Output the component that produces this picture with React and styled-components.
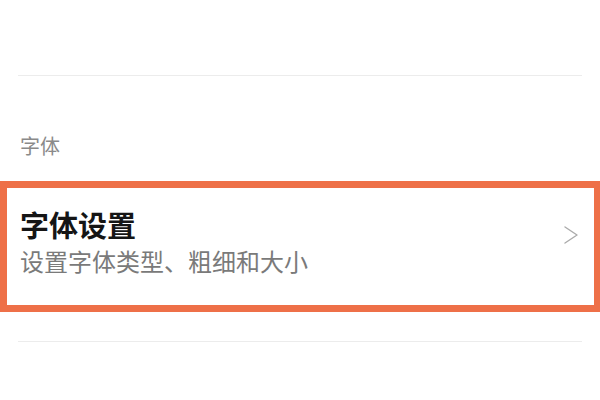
import React from "react";
import styled, { createGlobalStyle } from "styled-components";

const Global = createGlobalStyle`
  html, body { margin: 0; padding: 0; background: #ffffff; }
  body {
    font-family: "Noto Sans CJK SC", "Noto Sans", sans-serif;
    overflow: hidden;
    width: 600px;
    height: 400px;
  }
`;

const Page = styled.div`
  width: 600px;
  height: 400px;
  overflow: hidden;
  background: #ffffff;
  display: flex;
  flex-direction: column;
`;

const Spacer = styled.div`
  height: ${(p) => p.h}px;
  flex: none;
`;

const Divider = styled.div`
  height: 1px;
  margin: 0 18px;
  background: #ececec;
  flex: none;
`;

const SectionHeader = styled.div`
  height: 105px;
  padding: 56px 0 0 20px;
  box-sizing: border-box;
  font-size: 20px;
  line-height: 28px;
  color: #8a8a8a;
  flex: none;
`;

const HighlightRow = styled.div`
  height: 131px;
  box-sizing: border-box;
  border: 7px solid #ee7048;
  border-right-width: 6px;
  padding: 18px 14px 0 13px;
  display: flex;
  align-items: flex-start;
  flex: none;
`;

const RowText = styled.div`
  flex: 1;
  display: flex;
  flex-direction: column;
  gap: 4px;
`;

const Title = styled.div`
  font-size: 29px;
  line-height: 36px;
  font-weight: 700;
  color: #151515;
`;

const Subtitle = styled.div`
  font-size: 24px;
  line-height: 30px;
  color: #7a7a7a;
`;

const Chevron = styled.svg`
  flex: none;
  margin-top: 19px;
  margin-right: 1px;
  width: 16px;
  height: 20px;
`;

const NextRow = styled.div`
  padding: 54px 0 0 20px;
  font-size: 29px;
  line-height: 36px;
  font-weight: 700;
  color: #151515;
  flex: none;
`;

export default function App() {
  return (
    <Page>
      <Global />
      <Spacer h={75} />
      <Divider />
      <SectionHeader>字体</SectionHeader>
      <HighlightRow>
        <RowText>
          <Title>字体设置</Title>
          <Subtitle>设置字体类型、粗细和大小</Subtitle>
        </RowText>
        <Chevron viewBox="0 0 16 20">
          <polyline
            points="2,2 14,10 2,18"
            fill="none"
            stroke="#ababab"
            strokeWidth="1.4"
            strokeLinecap="round"
            strokeLinejoin="round"
          />
        </Chevron>
      </HighlightRow>
      <Spacer h={29} />
      <Divider />
      <NextRow>字号</NextRow>
    </Page>
  );
}
